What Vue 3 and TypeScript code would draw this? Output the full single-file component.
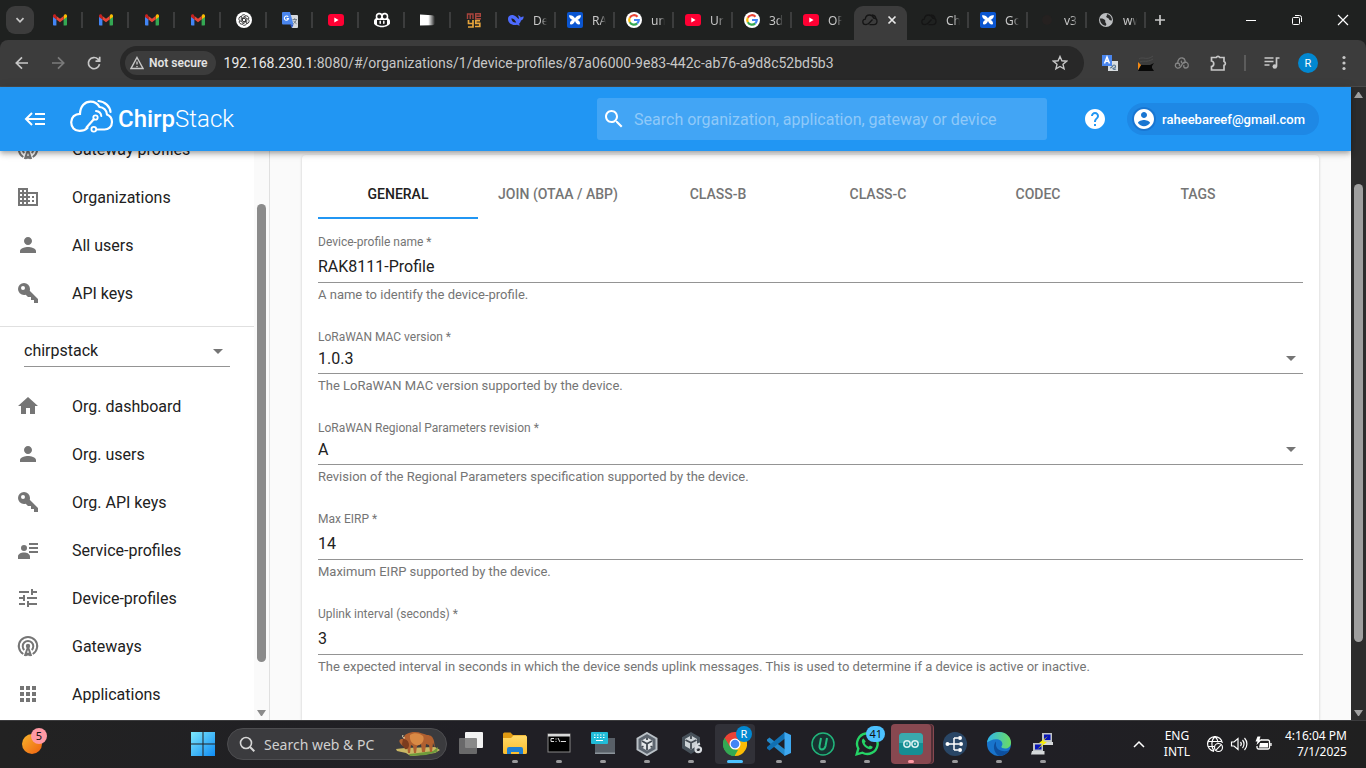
<script setup lang="ts">
import { ref } from 'vue'

interface BrowserTab { icon: string; title?: string; active?: boolean }
interface NavItem { icon: string; label: string }
interface Field { id: string; label: string; help: string; kind: 'text' | 'select'; value: string }
interface TaskApp { icon: string; name: string; state: 'idle' | 'open' | 'active' | 'alert' }

const browserTabs: BrowserTab[] = [
  { icon: 'gmail' },
  { icon: 'gmail' },
  { icon: 'gmail' },
  { icon: 'gmail' },
  { icon: 'gpt' },
  { icon: 'gtranslate' },
  { icon: 'youtube' },
  { icon: 'copilot' },
  { icon: 'flag' },
  { icon: 'meys' },
  { icon: 'whale', title: 'De' },
  { icon: 'rak', title: 'RA' },
  { icon: 'google', title: 'un' },
  { icon: 'youtube', title: 'Ur' },
  { icon: 'google', title: '3d' },
  { icon: 'youtube', title: 'OP' },
  { icon: 'cloudtab', active: true },
  { icon: 'cloudtab', title: 'Ch' },
  { icon: 'rak', title: 'Go' },
  { icon: 'blank', title: 'v3' },
  { icon: 'globe', title: 'ww' },
]

const adminNav: NavItem[] = [
  { icon: 'antenna', label: 'Gateway profiles' },
  { icon: 'domain', label: 'Organizations' },
  { icon: 'person', label: 'All users' },
  { icon: 'key', label: 'API keys' },
]

const orgNav: NavItem[] = [
  { icon: 'home', label: 'Org. dashboard' },
  { icon: 'person', label: 'Org. users' },
  { icon: 'key', label: 'Org. API keys' },
  { icon: 'details', label: 'Service-profiles' },
  { icon: 'tune', label: 'Device-profiles' },
  { icon: 'antenna', label: 'Gateways' },
  { icon: 'apps', label: 'Applications' },
]

const sections = ['General', 'Join (OTAA / ABP)', 'Class-B', 'Class-C', 'Codec', 'Tags']
const section = ref('General')

const fields = ref<Field[]>([
  { id: 'name', kind: 'text', label: 'Device-profile name *', value: 'RAK8111-Profile', help: 'A name to identify the device-profile.' },
  { id: 'mac', kind: 'select', label: 'LoRaWAN MAC version *', value: '1.0.3', help: 'The LoRaWAN MAC version supported by the device.' },
  { id: 'rev', kind: 'select', label: 'LoRaWAN Regional Parameters revision *', value: 'A', help: 'Revision of the Regional Parameters specification supported by the device.' },
  { id: 'eirp', kind: 'text', label: 'Max EIRP *', value: '14', help: 'Maximum EIRP supported by the device.' },
  { id: 'uplink', kind: 'text', label: 'Uplink interval (seconds) *', value: '3', help: 'The expected interval in seconds in which the device sends uplink messages. This is used to determine if a device is active or inactive.' },
])

const taskApps: TaskApp[] = [
  { icon: 'taskview', name: 'Task view', state: 'idle' },
  { icon: 'folder', name: 'File Explorer', state: 'open' },
  { icon: 'terminal', name: 'Command Prompt', state: 'open' },
  { icon: 'keyboard', name: 'On-screen keyboard', state: 'open' },
  { icon: 'unity', name: 'Unity Hub', state: 'open' },
  { icon: 'unity6', name: 'Unity', state: 'open' },
  { icon: 'chrome', name: 'Chrome', state: 'active' },
  { icon: 'vscode', name: 'Visual Studio Code', state: 'open' },
  { icon: 'iobit', name: 'Uninstaller', state: 'open' },
  { icon: 'whatsapp', name: 'WhatsApp', state: 'open' },
  { icon: 'arduino', name: 'Arduino IDE', state: 'alert' },
  { icon: 'mqtt', name: 'MQTT Explorer', state: 'open' },
  { icon: 'edge', name: 'Edge', state: 'open' },
  { icon: 'putty', name: 'PuTTY', state: 'open' },
]
const badges: Record<string, string> = { chrome: 'R', whatsapp: '41' }
</script>

<template>
  <div class="screen">
    <svg class="sprite" aria-hidden="true">
      <defs>
        <linearGradient id="gBlue" x1="0" y1="0" x2="1" y2="1"><stop offset="0" stop-color="#7de8fb" /><stop offset="1" stop-color="#0f8cf5" /></linearGradient>
        <linearGradient id="gSun" x1="0" y1="0" x2="1" y2="1"><stop offset="0" stop-color="#f8b62c" /><stop offset="1" stop-color="#ee5f10" /></linearGradient>
        <linearGradient id="gFolder" x1="0" y1="0" x2="0" y2="1"><stop offset="0" stop-color="#ffd968" /><stop offset="1" stop-color="#fbbd2c" /></linearGradient>
        <linearGradient id="gEdge" x1="0" y1="0" x2="1" y2="0"><stop offset="0" stop-color="#2fb5ea" /><stop offset="1" stop-color="#6bdc62" /></linearGradient>
        <linearGradient id="gFade" x1="0" y1="0" x2="1" y2="0"><stop offset=".55" stop-color="#fff" /><stop offset="1" stop-color="#fff" stop-opacity="0" /></linearGradient>
      </defs>
      <symbol id="gmail" viewBox="0 0 16 16">
        <path fill="#4285f4" d="M1 4.5v8.200c0 .5.300.8.800.8h2.600V7z" />
        <path fill="#34a853" d="M11.600 7v6.500h2.600c.5 0 .8-.3.8-.8V4.500z" />
        <path fill="#fbbc04" d="M11.600 4v3.500L15 5V3.800c0-1.300-1.500-2-2.500-1.200z" />
        <path fill="#ea4335" d="M4.400 7.500V4L8 6.700 11.600 4v3.500L8 10.200z" />
        <path fill="#c5221f" d="M1 3.800V5l3.400 2.500V4l-.9-1.400C2.500 1.800 1 2.500 1 3.800z" />
      </symbol>
      <symbol id="gpt" viewBox="0 0 16 16">
        <circle cx="8" cy="8" r="8" fill="#fff" />
        <g fill="none" stroke="#222" stroke-width=".8">
          <path id="petal" d="M8 9.800L5.300 8.200V5a2.400 2.400 0 0 1 4.300-1.400" />
          <use href="#petal" transform="rotate(60 8 8)" />
          <use href="#petal" transform="rotate(120 8 8)" />
          <use href="#petal" transform="rotate(180 8 8)" />
          <use href="#petal" transform="rotate(240 8 8)" />
          <use href="#petal" transform="rotate(300 8 8)" />
        </g>
      </symbol>
      <symbol id="gtranslate" viewBox="0 0 16 16">
        <path fill="#d6d9dd" d="M7 3h8a1 1 0 0 1 1 1v11a1 1 0 0 1-1 1h-5z" />
        <path fill="#4a86ee" d="M1 0h7l3.500 12.500H1a1 1 0 0 1-1-1V1a1 1 0 0 1 1-1z" />
        <path fill="#2a56c6" d="M8 12.500h3.500L10 16z" />
        <path fill="none" stroke="#fff" stroke-width="1.100" d="M6.200 5a2.100 2.100 0 1 0 .3 1.600H4.600" />
        <path fill="none" stroke="#6d7780" stroke-width=".9" d="M10.500 7.500h4.500M12.700 6.200v1.300M14.300 7.500c-.5 2-1.600 3.300-3 4.200M11.600 8.800c.6 1.200 1.600 2.200 3 3" />
      </symbol>
      <symbol id="youtube" viewBox="0 0 16 16"><rect y="2" width="16" height="12" rx="3" fill="#ff0033" /><path fill="#fff" d="M6.300 5.500v5L10.600 8z" /></symbol>
      <symbol id="copilot" viewBox="0 0 16 16">
        <path fill="#fff" d="M4.500.8c1.400-.3 2.700 0 3.500.9.800-.9 2.100-1.200 3.500-.9 2.500.5 3.200 2.400 2.600 5.400 1.100.7 1.900 1.800 1.900 3v2c0 1.600-4 4-8 4s-8-2.400-8-4v-2c0-1.200.8-2.300 1.900-3-.6-3 .1-4.900 2.600-5.400z" />
        <rect x="3.300" y="2.500" width="3.800" height="4" rx="1.700" fill="#1f2020" /><rect x="8.900" y="2.500" width="3.800" height="4" rx="1.700" fill="#1f2020" />
        <path fill="#1f2020" d="M3 8h10v4.500c-3 1.600-7 1.600-10 0z" /><path stroke="#fff" stroke-width="1.500" stroke-linecap="round" d="M6.200 9.300v2M9.800 9.300v2" />
      </symbol>
      <symbol id="flag" viewBox="0 0 16 16"><path fill="url(#gFade)" d="M0 2.500l12 .8c2 .3 3 1 3 2v6c0 1-1 1.700-3 1.900L0 13.500z" /></symbol>
      <symbol id="meys" viewBox="0 0 16 16">
        <g fill="none" stroke="#a8443d" stroke-width="1.400"><path d="M1.500 7V2h5.500v5M4.200 2v5M9 4.300h5.300V1.700H9.700v5H15" /></g>
        <g fill="none" stroke="#e6a53c" stroke-width="1.700"><path d="M2.500 8v3.500H7V8M7 11.500V15H2M14 8.700H9.800v2.700h4v3.100H9" /></g>
      </symbol>
      <symbol id="whale" viewBox="0 0 16 16">
        <path fill="#4d6bfe" d="M0 7c0-3 2.700-4.600 5.600-3.800C8 3.900 9.200 6 11 7c-.2-1.600-.5-2.600-1.200-3.700 1.400.2 2.500 1 3 2.100.7-.6 1.700-.9 2.900-1-.1 2.200-1.100 3.600-2.700 4.200-.3 1.500-1.100 2.700-2.200 3.500l1.300 1.200c-1.200.3-2.300 0-3-.6C4.700 14 0 11.500 0 7z" />
        <path fill="#1f2020" d="M3.500 6.200c2 .2 3.800 1.800 4.800 4.400-2.700.2-5-1.700-4.800-4.400z" />
      </symbol>
      <symbol id="rak" viewBox="0 0 16 16"><rect width="16" height="16" rx="2" fill="#0a55d0" /><path fill="#fff" d="M2 3.300c2.500-.6 4.500.6 6 3 1.500-2.400 3.500-3.600 6-3-.2 2.600-1.500 4-3.600 4.700 1.900.6 2.900 2 2.600 4.300-2.500.6-4-.8-5-3.300-1 2.500-2.500 3.900-5 3.300C2.700 10 3.700 8.600 5.600 8 3.500 7.300 2.200 5.900 2 3.300z" /></symbol>
      <symbol id="google" viewBox="0 0 16 16">
        <circle cx="8" cy="8" r="8" fill="#fff" />
        <g fill="none" stroke-width="2.200"><path stroke="#ea4335" d="M3.800 5.700A4.800 4.800 0 0 1 11.500 4.700" /><path stroke="#fbbc05" d="M3.800 5.700a4.800 4.800 0 0 0 0 4.600" /><path stroke="#34a853" d="M3.800 10.300a4.800 4.800 0 0 0 7.400 1.100" /><path stroke="#4285f4" d="M11.200 11.400A4.800 4.800 0 0 0 12.800 8H8" /></g>
      </symbol>
      <symbol id="cloudtab" viewBox="0 0 16 16"><path fill="none" stroke="#151515" stroke-width="1.300" d="M7 11.500L4 12.700C1.600 12.700.8 11 .8 9.800.8 8.200 2 7.300 3.300 7.200 3.500 4.500 5.500 3 7.600 3c2 0 3.500 1.300 4 3 2 0 3.400 1.300 3.400 3.300s-1.300 3.400-3.200 3.400H7.500M6 12.300L10.500 7.500M10 3c2.300.2 3.800 1.800 4 4" /></symbol>
      <symbol id="blank" viewBox="0 0 16 16"><circle cx="8" cy="8" r="5" fill="#252120" /></symbol>
      <symbol id="globe" viewBox="0 0 16 16"><circle cx="8" cy="8" r="7" fill="#bcbec0" /><path fill="#292a2a" d="M2 6.500c2-.3 4 .2 5 1.500.8 1-.3 2 .8 3 .8.800.7 1.900 0 2.700C4 13.500 1.800 10 2 6.500zM8.500 2.300C10 3 8 4 8.300 5c.4 1.200 2.300.6 2.600 2 .3 1.100 1.800 1.800 3 1.200C14 5 11.600 2.200 8.500 2.300z" /></symbol>

      <symbol id="antenna" viewBox="0 0 24 24">
        <g fill="none" stroke="currentColor" stroke-width="2"><path d="M7.300 20A9.200 9.200 0 1 1 16.700 20" /><path d="M8.300 16A5.300 5.300 0 1 1 15.700 16" /><path d="M12 13L8.800 22M12 13l3.200 9M10.300 19L14 21.500M13.700 19L10 21.500" /></g>
        <circle cx="12" cy="12" r="2.200" fill="currentColor" />
      </symbol>
      <symbol id="domain" viewBox="0 0 24 24"><path fill="currentColor" d="M12 7V3H2v18h20V7H12zM6 19H4v-2h2v2zm0-4H4v-2h2v2zm0-4H4V9h2v2zm0-4H4V5h2v2zm4 12H8v-2h2v2zm0-4H8v-2h2v2zm0-4H8V9h2v2zm0-4H8V5h2v2zm10 12h-8v-2h2v-2h-2v-2h2v-2h-2V9h8v10zm-2-8h-2v2h2v-2zm0 4h-2v2h2v-2z" /></symbol>
      <symbol id="person" viewBox="0 0 24 24"><path fill="currentColor" d="M12 12c2.210 0 4-1.790 4-4s-1.790-4-4-4-4 1.790-4 4 1.790 4 4 4zm0 2c-2.670 0-8 1.340-8 4v2h16v-2c0-2.660-5.330-4-8-4z" /></symbol>
      <symbol id="key" viewBox="0 0 24 24"><path fill="currentColor" d="M22,18V22H18V19H15V16H12L9.740,13.740C9.190,13.910 8.610,14 8,14A6,6 0 0,1 2,8A6,6 0 0,1 8,2A6,6 0 0,1 14,8C14,8.610 13.910,9.190 13.740,9.740L22,18M7,5A2,2 0 0,0 5,7A2,2 0 0,0 7,9A2,2 0 0,0 9,7A2,2 0 0,0 7,5Z" /></symbol>
      <symbol id="home" viewBox="0 0 24 24"><path fill="currentColor" d="M10 20v-6h4v6h5v-8h3L12 3 2 12h3v8z" /></symbol>
      <symbol id="details" viewBox="0 0 24 24"><circle cx="8" cy="10" r="3" fill="currentColor" /><path fill="currentColor" d="M2 21v-2.500C2 16 5 14.500 8 14.500s6 1.500 6 4V21zM13 5h9v2h-9zM13 9h9v2h-9zM13 13h9v2h-9z" /></symbol>
      <symbol id="tune" viewBox="0 0 24 24"><path fill="currentColor" d="M3 17v2h6v-2H3zM3 5v2h10V5H3zm10 16v-2h8v-2h-8v-2h-2v6h2zM7 9v2H3v2h4v2h2V9H7zm14 4v-2H11v2h10zm-6-4h2V7h4V5h-4V3h-2v6z" /></symbol>
      <symbol id="apps" viewBox="0 0 24 24"><path fill="currentColor" d="M4 8h4V4H4v4zm6 12h4v-4h-4v4zm-6 0h4v-4H4v4zm0-6h4v-4H4v4zm6 0h4v-4h-4v4zm6-10v4h4V4h-4zm-6 4h4V4h-4v4zm6 6h4v-4h-4v4zm0 6h4v-4h-4v4z" /></symbol>

      <symbol id="taskview" viewBox="0 0 24 24"><rect x="6" width="18" height="16" rx="1" fill="#f2f2f2" /><rect y="6" width="18" height="16" rx="1" fill="#777" fill-opacity=".85" /></symbol>
      <symbol id="folder" viewBox="0 0 24 24"><path fill="#e09a12" d="M0 2a1.500 1.500 0 0 1 1.500-1.500h6L10 3h13v8H0z" /><path fill="url(#gFolder)" d="M0 6h8l2.500-2.500H22.500A1.500 1.500 0 0 1 24 5v15.500a1.500 1.500 0 0 1-1.500 1.500h-21A1.500 1.500 0 0 1 0 20.500z" /><path fill="#1f7fd2" d="M4 22v-5a2 2 0 0 1 2-2h12a2 2 0 0 1 2 2v5h-4v-2H8v2z" /></symbol>
      <symbol id="terminal" viewBox="0 0 24 24"><rect x="1" y="2" width="22" height="18" fill="#000" stroke="#888" /><path fill="#d8d8d8" d="M1 2h22v2.500H1z" /><path stroke="#ddd" fill="none" d="M7 6.500H4v3h3M9 6.500v1M9 9v1M11 6l2 4M14 9.500h5" /></symbol>
      <symbol id="keyboard" viewBox="0 0 24 24"><rect x="4" y="6" width="20" height="16" fill="#596068" /><path fill="#8c949b" d="M4 20.500h20V22H4z" /><rect width="17" height="12" rx="1" fill="#21bcd8" /><path stroke="#fff" stroke-width="1.200" stroke-dasharray="1.500 1.500" d="M3 3h12M3 5.500h12" /><path stroke="#fff" d="M5 8.500h7" /></symbol>
      <symbol id="unity" viewBox="0 0 24 24"><path fill="#5e6670" stroke="#b9c0c6" stroke-width="2" d="M12 1l9.500 5.500v11L12 23l-9.500-5.500v-11z" /><path fill="#e5e8ea" d="M12 5.500l5.500 3.200v6.500L12 18.500l-5.500-3.300V8.700z" /><path stroke="#434a52" stroke-width="1.800" fill="none" d="M12 18v-6.200L7 9M12 11.800L17 9M12 5.500V8M6.500 15.200l2-1M17.500 15.200l-2-1" /></symbol>
      <symbol id="unity6" viewBox="0 0 24 24"><path fill="#47515a" d="M12 0l9 5.300v11L12 22l-9-5.700v-11z" /><path fill="#ccd2d6" d="M12 3.500l6 3.400v7L12 17.500l-6-3.600v-7z" /><path stroke="#434a52" stroke-width="1.800" fill="none" d="M12 17v-6.200L6.500 8M12 10.800L17.500 8M12 3.500V7" /><path fill="none" stroke="#d8dce0" stroke-width="2.200" d="M21 11.500c-3 1-4.500 3-4.500 6 0 3.500 5 3.500 5.500.3.300-2.800-3-3.500-5-1.500" /></symbol>
      <symbol id="chrome" viewBox="0 0 24 24"><path fill="#ea4335" d="M12 12L1.600 6A12 12 0 0 1 22.400 6z" /><path fill="#fbbc05" d="M12 12l10.400-6A12 12 0 0 1 12 24z" /><path fill="#34a853" d="M12 12v12A12 12 0 0 1 1.600 6z" /><path fill="#ea4335" d="M1.600 6l5.600 9L12 7h11z" /><path fill="#34a853" d="M1.600 6l5.200 9L12 17.500l3 .5-3.500 6A12 12 0 0 1 1.600 6z" /><circle cx="12" cy="12" r="5.500" fill="#fff" /><circle cx="12" cy="12" r="4.300" fill="#4285f4" /></symbol>
      <symbol id="vscode" viewBox="0 0 24 24"><path fill="#2489ca" d="M0 7.500L2.500 5.500 18 17.500V24L0 9z" /><path fill="#1070b3" d="M0 16.500l2.500 2L18 6.500V0L0 15z" /><path fill="#3ea8f0" d="M17.500 0L24 3v18l-6.500 3z" /></symbol>
      <symbol id="iobit" viewBox="0 0 24 24"><circle cx="12" cy="12" r="11" fill="#173331" stroke="#21b57b" stroke-width="1.500" /><path fill="none" stroke="#23bc7e" stroke-width="2" d="M10 6L8.500 14c-.7 4.500 5 4.500 6 0L16 6" /></symbol>
      <symbol id="whatsapp" viewBox="0 0 24 24"><path fill="none" stroke="#25d366" stroke-width="2.400" d="M1.700 22.300l1.600-5.700A10.300 10.300 0 1 1 7.400 20.700z" /><path fill="#25d366" d="M8.500 6.500c-1.300.5-2 2-1.500 3.700 1 3.400 4 6.200 7.300 7 2 .4 3.300-.7 3.400-2.400L15 13.400l-1.400 1.300c-1.900-.8-3.200-2.200-4-3.800l1.200-1.400z" /></symbol>
      <symbol id="arduino" viewBox="0 0 24 24"><rect y="1" width="24" height="22" rx="4" fill="#158e93" /><path fill="#3aa9ad" d="M4 1h16a4 4 0 0 1 4 4v6H0V5a4 4 0 0 1 4-4z" /><g fill="none" stroke="#d8f0f0" stroke-width="1.500"><circle cx="8" cy="12" r="3.200" /><circle cx="16" cy="12" r="3.200" /></g><path stroke="#d8f0f0" d="M7 12h2M15 12h2M16 11v2" /></symbol>
      <symbol id="mqtt" viewBox="0 0 24 24"><circle cx="12" cy="12" r="12" fill="#294666" /><path fill="none" stroke="#fff" stroke-width="1.500" d="M5 12h6M11 6v12M11 6h4M11 12h5M11 18h4" /><g fill="#fff"><circle cx="4.500" cy="12" r="2" /><circle cx="17" cy="6" r="2" /><circle cx="18" cy="12" r="2" /><circle cx="17" cy="18" r="2" /></g></symbol>
      <symbol id="edge" viewBox="0 0 24 24"><circle cx="12" cy="12" r="12" fill="#1874cc" /><path fill="url(#gEdge)" d="M0 10.500C1 4.500 6 0 12 0c7 0 12 5 12 10.500 0 4-2.800 6-6 6-2.300 0-3.600-.8-3.600-1.700 0-.7 1-1 1-3 0-2.600-2.700-4.600-6.400-4.600-4 0-7 2-9 3.300z" /><path fill="#0d4f9e" d="M9 9.500c-3.500 3.500-2.600 11 3 14.400C18 23.500 21 21 22.500 18c-5 2.500-12.500 1-13.500-4.500z" /></symbol>
      <symbol id="putty" viewBox="0 0 24 24"><rect x="11" y="1" width="10" height="9" fill="#bfc3c6" /><rect x="13" y="2.500" width="6.500" height="5.500" fill="#0714b8" /><path fill="#d5d8da" d="M11 10h11v3H10z" /><rect x="2" y="11" width="10" height="8" fill="#bfc3c6" /><rect x="4" y="12.500" width="6.500" height="5" fill="#0714b8" /><path fill="#d5d8da" d="M1 19h12.500v3.500H0z" /><path fill="#f9ee00" d="M17 4l-9 7 4 .5-6 6 10-7.500-4-.7z" /></symbol>
    </svg>

    <header class="tabstrip">
      <button class="tab-search" aria-label="Search tabs"><svg width="12" height="12" viewBox="0 0 12 12"><path class="line" d="M2.500 4.200L6 7.800l3.500-3.600" /></svg></button>
      <div class="tabs">
        <button v-for="(tab, i) in browserTabs" :key="i" class="tab" :class="{ wide: tab.title || tab.active, active: tab.active, before: browserTabs[i + 1]?.active }" :aria-label="tab.title || tab.icon">
          <svg class="fav"><use :href="'#' + tab.icon" /></svg>
          <span v-if="tab.title" class="tab-title">{{ tab.title }}</span>
          <svg v-if="tab.active" width="10" height="10" viewBox="0 0 10 10"><path class="line bright" d="M1.500 1.500l7 7M8.500 1.500l-7 7" /></svg>
        </button>
      </div>
      <button class="new-tab" aria-label="New tab"><svg width="12" height="12" viewBox="0 0 12 12"><path class="line" d="M6 1v10M1 6h10" /></svg></button>
      <div class="window-buttons">
        <button aria-label="Minimize"><svg width="12" height="12" viewBox="0 0 12 12"><path stroke="#fff" d="M1 6.500h10" /></svg></button>
        <button aria-label="Restore"><svg width="12" height="12" viewBox="0 0 12 12" fill="none" stroke="#fff"><rect x="1.500" y="3.500" width="7" height="7" rx="1" /><path d="M4 1.500h4.500a2 2 0 0 1 2 2V8" /></svg></button>
        <button aria-label="Close"><svg width="12" height="12" viewBox="0 0 12 12"><path stroke="#fff" stroke-width="1.200" d="M1 1l10 10M11 1L1 11" /></svg></button>
      </div>
    </header>

    <div class="toolbar">
      <button aria-label="Back"><svg width="16" height="16" viewBox="0 0 16 16"><path class="line" d="M14 8H2.500M8 2.300L2.300 8 8 13.700" /></svg></button>
      <button class="dim" aria-label="Forward"><svg width="16" height="16" viewBox="0 0 16 16"><path class="line" d="M2 8h11.500M8 2.300L13.700 8 8 13.700" /></svg></button>
      <button aria-label="Reload"><svg width="16" height="16" viewBox="0 0 16 16"><path class="line" d="M13.500 9.200A5.600 5.600 0 1 1 12 4.200l1.600 1.600M13.700 1.800v4.300H9.500" /></svg></button>
      <div class="omnibox">
        <button class="chip-secure"><svg width="14" height="14" viewBox="0 0 14 14"><path class="line thin" d="M7 1.500L13 12.500H1z" /><path class="line thin" d="M7 5.500v3M7 10v1.200" /></svg>Not secure</button>
        <span class="url" aria-label="Address"><b>192.168.230.1</b>:8080/#/organizations/1/device-profiles/87a06000-9e83-442c-ab76-a9d8c52bd5b3</span>
        <button class="star" aria-label="Bookmark"><svg width="16" height="16" viewBox="0 0 16 16"><path class="line thin" d="M8 1.500l1.900 4.300 4.700.4-3.600 3.100 1.100 4.600L8 11.500l-4.100 2.400L5 9.300 1.400 6.200l4.700-.4z" /></svg></button>
      </div>
      <button aria-label="Translate"><svg width="16" height="16" viewBox="0 0 16 16"><path fill="#d8dde0" d="M6 6h10v10H6z" /><path fill="#4a86ee" d="M0 0h10v11H0z" /><path fill="none" stroke="#fff" stroke-width="1.500" d="M2.500 8.500L5 2l2.500 6.500M3.500 6.300h3" /><path fill="none" stroke="#52728f" stroke-width="1.200" d="M8 13c3 0 2-3 4-3s2 3 0 3-1 2 2 1" /></svg></button>
      <button aria-label="Extension"><svg width="16" height="16" viewBox="0 0 16 16"><path fill="#080808" d="M0 16l3-6h9l4-2-2 3v2l2 3z" /><path fill="#f58a12" d="M0 7l3 3-3 5z" /><path stroke="#4c4c4c" fill="none" d="M1 4c4-3 8 2 14-3M2 7c3-2 7 1 13-3" /></svg></button>
      <button aria-label="Extension"><svg width="16" height="16" viewBox="0 0 16 16" fill="none" stroke="#858585" stroke-width="1.300"><path d="M8 9.500c1.200-2 3-3 4.800-2 2.400 1.400 1.800 5.500-1 5.500-2 0-2.800-2-1.500-3M8 9.500C6.500 13 4.500 13.500 3 13 .5 12 .8 8.300 3.500 8c2 0 2.800 2 1.500 3M3.800 8C3.500 4.500 6 2.500 8.500 3c3 .6 3.500 4.500 1 5.200-2 .4-2.800-1.400-1.800-2.400" /></svg></button>
      <button aria-label="Extensions"><svg width="18" height="18" viewBox="0 0 18 18"><path class="line" d="M2.500 3.500H7.200a2 2 0 0 1 3.600 0H15v4a2 2 0 0 1 0 3.800V16H2.500v-3.500c3-.5 3-5 0-5.500z" /></svg></button>
      <i class="bar"></i>
      <button aria-label="Media"><svg width="18" height="16" viewBox="0 0 18 16"><path class="line" d="M1.500 3h9M1.500 6.500h9M1.500 10h5" /><circle cx="11.800" cy="11.500" r="2.300" fill="#c7c7c7" /><path class="line" d="M13.500 11.500V3h3" /></svg></button>
      <button aria-label="Profile"><span class="avatar">R</span></button>
      <button aria-label="Menu"><svg width="16" height="16" viewBox="0 0 16 16" fill="#c7c7c7"><circle cx="8" cy="2.500" r="1.600" /><circle cx="8" cy="8" r="1.600" /><circle cx="8" cy="13.500" r="1.600" /></svg></button>
    </div>

    <div class="viewport">
      <div class="page">
        <div class="appbar">
          <button class="icon-button" aria-label="Toggle menu"><svg width="24" height="24" viewBox="0 0 24 24" fill="none" stroke="#fff" stroke-width="2"><path d="M12 7h10M4 12h18M12 17h10M9 6l-6 6 6 6" /></svg></button>
          <a class="logo" href="#/" aria-label="ChirpStack">
            <svg width="44" height="34" viewBox="0 0 44 34" fill="none" stroke="#fff" stroke-width="2.200" stroke-linecap="round">
              <path d="M17.500 29c-2.500 2.200-5 2.900-8 2.900-5 0-8.300-3.800-8.300-8.600 0-5.100 3.700-8.500 8.800-8.500C10.300 6.800 15 2.700 20.500 2.700c4.900 0 7.400 2.500 9 5.300 4 .2 7.300 3.500 7.500 7.500 3.300 1.400 5 3.900 5 7.500 0 5-3.700 7.500-7.500 7.500H27" />
              <path d="M16.500 28.500l7.300-8.200M28.500 2c6.500.5 11.500 5.500 12 11" />
              <path d="M26 12c3 .3 5 2.300 5.300 5" stroke-width="2" />
              <circle cx="25.500" cy="18.500" r="2.200" stroke-width="1.800" /><circle cx="23.800" cy="30.200" r="2.400" stroke-width="1.800" />
            </svg>
            <span class="brand"><strong>Chirp</strong>Stack</span>
          </a>
          <label class="search"><svg width="24" height="24" viewBox="0 0 24 24"><path fill="#fff" d="M15.500 14h-.79l-.28-.27C15.410 12.590 16 11.110 16 9.500 16 5.910 13.090 3 9.500 3S3 5.910 3 9.500 5.910 16 9.500 16c1.610 0 3.090-.59 4.230-1.570l.27.28v.79l5 4.990L20.490 19l-4.990-5zm-6 0C7.010 14 5 11.990 5 9.500S7.010 5 9.500 5 14 7.010 14 9.500 11.990 14 9.500 14z" /></svg><input type="text" placeholder="Search organization, application, gateway or device" aria-label="Search" /></label>
          <a class="icon-button" href="#/help" aria-label="Help"><svg width="24" height="24" viewBox="0 0 24 24"><path fill="#fff" d="M12 2C6.480 2 2 6.480 2 12s4.480 10 10 10 10-4.480 10-10S17.520 2 12 2zm1 17h-2v-2h2v2zm2.070-7.750l-.9.920C13.450 12.900 13 13.500 13 15h-2v-.5c0-1.100.450-2.100 1.170-2.830l1.240-1.260c.370-.360.590-.860.590-1.410 0-1.100-.9-2-2-2s-2 .9-2 2H8c0-2.210 1.790-4 4-4s4 1.790 4 4c0 .880-.360 1.680-.930 2.250z" /></svg></a>
          <button class="user"><span class="user-icon"><svg width="24" height="24" viewBox="0 0 24 24"><path fill="#fff" d="M12 2C6.480 2 2 6.480 2 12s4.480 10 10 10 10-4.480 10-10S17.520 2 12 2zm0 3c1.660 0 3 1.340 3 3s-1.340 3-3 3-3-1.340-3-3 1.340-3 3-3zm0 14.200c-2.500 0-4.710-1.280-6-3.220.030-1.990 4-3.080 6-3.080 1.990 0 5.970 1.090 6 3.080-1.290 1.940-3.500 3.220-6 3.220z" /></svg></span>raheebareef@gmail.com</button>
        </div>

        <div class="body">
          <aside class="sidebar">
            <nav class="menu">
              <ul class="scrolled"><li v-for="item in adminNav" :key="item.label"><a href="#/"><svg class="nav-icon"><use :href="'#' + item.icon" /></svg>{{ item.label }}</a></li></ul>
              <div class="org">
                <select aria-label="Organization"><option>chirpstack</option></select>
                <svg class="caret" viewBox="0 0 24 24"><path d="M7 10l5 5 5-5z" /></svg>
              </div>
              <ul><li v-for="item in orgNav" :key="item.label"><a href="#/"><svg class="nav-icon"><use :href="'#' + item.icon" /></svg>{{ item.label }}</a></li></ul>
            </nav>
            <div class="scrollbar light"><i></i><i class="thumb"></i><svg viewBox="0 0 15 15"><path d="M3 5h9l-4 6h-1z" /></svg></div>
          </aside>

          <main class="content">
            <section class="card">
              <div class="section-tabs" role="tablist">
                <button v-for="name in sections" :key="name" role="tab" :aria-selected="section === name" :class="{ on: section === name }" @click="section = name">{{ name }}</button>
              </div>
              <form>
                <div v-for="field in fields" :key="field.id" class="field">
                  <label :for="field.id">{{ field.label }}</label>
                  <input v-if="field.kind === 'text'" :id="field.id" v-model="field.value" type="text" />
                  <div v-else class="pick">
                    <select :id="field.id" v-model="field.value"><option>{{ field.value }}</option></select>
                    <svg class="caret" viewBox="0 0 24 24"><path d="M7 10l5 5 5-5z" /></svg>
                  </div>
                  <p>{{ field.help }}</p>
                </div>
              </form>
            </section>
          </main>
        </div>
      </div>
      <div class="scrollbar dark"><svg viewBox="0 0 15 15"><path d="M3 11h9L8 5H7z" /></svg><i class="thumb"></i><svg viewBox="0 0 15 15"><path d="M3 5h9l-4 6h-1z" /></svg></div>
    </div>

    <footer class="taskbar">
      <div class="widgets">
        <button aria-label="Widgets"><svg width="20" height="20" viewBox="0 0 20 20"><circle cx="10" cy="10" r="10" fill="url(#gSun)" /></svg><span class="badge pink">5</span></button>
      </div>
      <button class="task" aria-label="Start"><svg width="24" height="24" viewBox="0 0 24 24"><path fill="url(#gBlue)" d="M0 0h11.500v11.500H0zM12.500 0H24v11.500H12.500zM0 12.500h11.500V24H0zM12.500 12.500H24V24H12.500z" /></svg></button>
      <label class="task-search">
        <svg width="16" height="16" viewBox="0 0 16 16" fill="none" stroke="#d6d6d6" stroke-width="1.600"><circle cx="7" cy="7" r="5.500" /><path d="M11 11l4.300 4.300" stroke-width="2" /></svg>
        <input type="text" placeholder="Search web &amp; PC" aria-label="Search web and PC" />
        <svg width="44" height="26" viewBox="0 0 44 26">
          <path fill="#c9b765" d="M0 18l9-1 30-1 5 3-5 3-22 3c-3 0-5-2-7-3l-9-2z" /><path fill="#6f9b3b" d="M13 23l9-1 15-2 5-4-1 5-11 3-16 1z" />
          <path fill="#b06030" d="M7 8c1-5 6-7 12-7 5 0 8 2 12 3 4 0 6 2 7 6l1 7-2-5-1 9h-2l-1-7-3-1-1 8h-3l-1-8-4 2-1 7h-2l-1-7-2-1-1 8h-2l-1-8c-3 2-5 1-7-2-1-2-1-3 1-4z" />
          <path fill="#d98a45" d="M14 4c4-3 10-2 13 1 2 4-1 8-4 9-5 1-10-3-9-10z" /><path fill="#7c3c1e" d="M7 8c3 0 6 2 6 6 0 3-2 5-4 4-1-2-3-3-3-5z" /><path fill="none" stroke="#eee0bb" d="M7 4c-1 2 0 3 2 3" />
        </svg>
      </label>
      <button v-for="app in taskApps" :key="app.name" class="task" :class="app.state" :aria-label="app.name">
        <svg class="app-icon" width="24" height="24"><use :href="'#' + app.icon" /></svg>
        <span v-if="badges[app.icon]" class="badge blue" :class="app.icon">{{ badges[app.icon] }}</span>
      </button>
      <div class="tray">
        <button aria-label="Hidden icons"><svg width="12" height="8" viewBox="0 0 12 8"><path fill="none" stroke="#fff" stroke-width="1.500" d="M1 7l5-5 5 5" /></svg></button>
        <span class="lang">ENG<br />INTL</span>
        <span class="status">
          <svg width="18" height="18" viewBox="0 0 18 18" fill="none" stroke="#fff" stroke-width="1.200"><path d="M8 16.300A7.400 7.400 0 1 1 16.300 8M1.500 6.500h14M1.500 11.500H8M9 1.500C5 5 5 12 8 16M9 1.500c2 2 3 4 3 6" /><circle cx="12.500" cy="12.500" r="4" /><path d="M9.700 15.300l5.600-5.600" /></svg>
          <svg width="18" height="18" viewBox="0 0 18 18" fill="none" stroke="#fff" stroke-width="1.200"><path d="M1.500 7v4h2.500L8 14.500v-11L4 7zM10.500 7c1 1.200 1 2.800 0 4M12.500 5c2 2.200 2 5.800 0 8M14.500 3c3.200 3.500 3.200 8.500 0 12" /></svg>
          <svg width="18" height="18" viewBox="0 0 18 18" fill="none" stroke="#fff" stroke-width="1.300"><path d="M7 5h7a1.500 1.500 0 0 1 1.500 1.500v6A1.500 1.500 0 0 1 14 14H4.500A1.500 1.500 0 0 1 3 12.500V11M17 8v3" /><path fill="#fff" stroke="none" d="M6 8h8v4.500H5zM3.500 1.500h3L5.500 4.500H8L2.500 10l1-3.500h-2z" /></svg>
        </span>
        <span class="clock">4:16:04 PM<br />7/1/2025</span>
      </div>
    </footer>
  </div>
</template>

<style>
html, body { background: #202121; }
</style>

<style scoped>
.screen { display: flex; flex-direction: column; height: 100vh; overflow: hidden; font-family: Roboto, sans-serif; font-size: 16px; color: #212121; }
* { box-sizing: border-box; }
button { margin: 0; padding: 0; border: 0; background: none; color: inherit; font: inherit; }
input, select { margin: 0; padding: 0; border: 0; outline: 0; border-radius: 0; background: none; color: inherit; font: inherit; appearance: none; min-width: 0; }
a { color: inherit; text-decoration: none; }
ul { margin: 0; padding: 0; list-style: none; }
p { margin: 0; }
svg { flex: none; display: block; }
.sprite { position: absolute; width: 0; height: 0; }
.line { fill: none; stroke: #c7c7c7; stroke-width: 1.7px; }
.line.thin { stroke-width: 1.4px; }
.line.bright { stroke: #e8e8e8; }

/* browser chrome */
.tabstrip { flex: none; display: flex; align-items: center; height: 40px; padding-left: 6px; background: #1f2120; color: #c7c7c7; font-family: "Noto Sans", sans-serif; font-size: 12px; }
.tab-search { flex: none; display: grid; place-items: center; width: 28px; height: 28px; margin-right: 3px; border-radius: 9px; background: #3c3c3c; }
.tabs { display: flex; align-self: stretch; min-width: 0; }
.tab { position: relative; flex: none; display: flex; align-items: center; gap: 9px; width: 46px; padding-left: 15px; }
.tab.wide { width: 59px; padding-left: 11px; }
.tab::after { content: ""; position: absolute; right: 0; top: 12px; width: 2px; height: 16px; background: #3c3d3d; }
.tab.before::after, .tab.active::after { display: none; }
.fav { width: 16px; height: 16px; }
.tab-title { white-space: nowrap; mask-image: linear-gradient(90deg, #000 8px, transparent 14px); }
.tab.active { margin: 6px 3px 0; width: 53px; padding: 0 0 6px 8px; border-radius: 9px 9px 0 0; background: #3c3c3c; }
.new-tab { flex: none; display: grid; place-items: center; width: 28px; height: 28px; }
.window-buttons { display: flex; align-self: stretch; margin-left: auto; }
.window-buttons button { display: grid; place-items: center; width: 46px; }
.toolbar { flex: none; display: flex; align-items: center; height: 47px; padding: 0 4px; border-bottom: 1px solid #4a4a4a; border-radius: 8px 8px 0 0; background: #3c3c3c; font-family: Roboto, sans-serif; }
.toolbar > button { flex: none; display: grid; place-items: center; width: 36px; height: 36px; }
.dim { opacity: .45; }
.omnibox { flex: 1; display: flex; align-items: center; min-width: 0; height: 34px; margin: 0 8px; padding: 0 16px 0 5px; border-radius: 17px; background: #282828; }
.chip-secure { flex: none; display: flex; align-items: center; gap: 5px; height: 24px; padding: 0 8px 0 5px; border-radius: 12px; background: #3c3c3c; color: #e3e3e3; font-size: 12px; font-weight: 600; }
.url { flex: 1; overflow: hidden; margin-left: 8px; white-space: nowrap; color: #c7c7c7; font-size: 14px; }
.url b { font-weight: 400; color: #e8e8e8; }
.bar { width: 2px; height: 16px; margin: 0 8px; background: #5c5c5c; }
.avatar { display: grid; place-items: center; width: 20px; height: 20px; border-radius: 50%; background: #0288d1; color: #fff; font-size: 11px; }

/* web page */
.viewport { flex: 1; display: flex; min-height: 0; }
.page { flex: 1; display: flex; flex-direction: column; min-width: 0; background: #fafafa; }
.appbar { position: relative; z-index: 2; flex: none; display: flex; align-items: center; height: 64px; padding: 0 32px 0 11px; background: #2196f3; box-shadow: 0 2px 4px -1px rgba(0, 0, 0, .2), 0 4px 5px rgba(0, 0, 0, .14), 0 1px 10px rgba(0, 0, 0, .12); color: #fff; }
.icon-button { flex: none; display: grid; place-items: center; width: 48px; height: 48px; }
.logo { display: flex; align-items: center; gap: 4px; height: 48px; margin: 0 auto 0 11px; }
.logo svg { margin-bottom: 6px; }
.brand { font-size: 24px; font-weight: 300; line-height: 28px; }
.brand strong { font-weight: 500; }
.search { display: flex; align-items: center; gap: 8px; width: 450px; height: 42px; margin-right: 24px; padding: 0 5px; border-radius: 3px; background: #42a5f5; }
.search input { flex: 1; }
.search input::placeholder { color: #8fc9f9; opacity: 1; }
.user { display: flex; align-items: center; gap: 6px; height: 32px; margin-left: 8px; padding: 0 14px 0 5px; border-radius: 16px; background: #1e88e5; font-size: 13px; font-weight: 500; }
.user-icon { border-radius: 50%; background: #1976d2; }
.body { flex: 1; display: flex; min-height: 0; }
.sidebar { flex: none; display: flex; width: 270px; border-right: 1px solid #e0e0e0; background: #fff; }
.menu { flex: 1; overflow: hidden; }
.menu ul.scrolled { margin-top: -26px; padding-bottom: 9px; border-bottom: 1px solid #e0e0e0; }
.menu a { display: flex; align-items: center; gap: 32px; height: 48px; padding: 0 16px; }
.nav-icon { width: 24px; height: 24px; color: #757575; }
.org { position: relative; margin: 8px 24px 15px; }
.org select { display: block; width: 100%; height: 32px; border-bottom: 1px solid #949494; }
.caret { position: absolute; right: 0; top: 4px; width: 24px; height: 24px; fill: #757575; pointer-events: none; }
.scrollbar { flex: none; display: grid; width: 15px; }
.scrollbar svg { width: 15px; height: 15px; align-self: end; }
.scrollbar svg:first-child { align-self: start; }
.thumb { width: 9px; margin: 0 auto; border-radius: 5px; background: currentColor; }
.light { grid-template-rows: 53fr 458fr 58fr; background: #fafafa; color: #8b8b8b; }
.dark { grid-template-rows: 97fr 458fr 78fr; background: #2c2c2c; color: #9f9f9f; }
.scrollbar svg { fill: currentColor; }
.content { flex: 1; display: flex; min-width: 0; padding: 4px 32px 0; overflow: hidden; }
.card { flex: 1; min-width: 0; padding: 16px; border-radius: 4px 4px 0 0; background: #fff; box-shadow: 0 1px 3px rgba(0, 0, 0, .2); }
.section-tabs { display: flex; }
.section-tabs button { flex: none; width: 160px; height: 48px; border-bottom: 2px solid transparent; color: #757575; font-size: 14px; font-weight: 500; text-transform: uppercase; }
.section-tabs .on { border-color: #2196f3; color: #212121; }
form { display: flex; flex-direction: column; gap: 26px; padding-top: 15px; }
.field label { display: block; color: #757575; font-size: 12px; line-height: 16px; }
.field input { display: block; width: 100%; height: 33px; border-bottom: 1px solid #949494; }
.pick { position: relative; }
.pick select { display: block; width: 100%; height: 29px; padding-bottom: 2px; border-bottom: 1px solid #949494; }
.pick .caret { top: 1px; }
.field p { padding-top: 4px; color: #757575; font-size: 13px; line-height: 16px; }

/* desktop taskbar */
.taskbar { flex: none; display: flex; align-items: center; height: 48px; padding-bottom: 1px; border-top: 1px solid #3c3c3e; background: linear-gradient(90deg, #222 0, #201f25 35%, #201f25 75%, #202020 100%); color: #fff; font-family: "Noto Sans", sans-serif; }
.widgets { flex: none; width: 181px; padding-left: 22px; }
.widgets button { position: relative; display: block; }
.badge { position: absolute; display: grid; place-items: center; height: 16px; min-width: 16px; border-radius: 8px; color: #111; font-size: 11px; line-height: 16px; }
.pink { left: 9px; top: -6px; background: #ff99a4; }
.blue { right: 3px; top: 2px; background: #4cc2ff; }
.blue.chrome { background: #0288d1; color: #fff; }
.blue.whatsapp { right: 2px; padding: 0 3px; }
.task { position: relative; flex: none; display: grid; place-items: center; width: 40px; height: 40px; margin: 0 2px; border-radius: 4px; }
.task.open::after, .task.active::after, .task.alert::after { content: ""; position: absolute; left: 17px; bottom: 1px; width: 6px; height: 3px; border-radius: 2px; background: #9a9a9c; }
.task.active { background: #313138; }
.task.active::after { left: 12px; width: 16px; background: #4cc2ff; }
.task.alert { background: #884850; box-shadow: 2px 0 #4f2f36, 3px 0 #884850; }
.task.alert::after { background: #ff99a4; }
.task-search { flex: none; display: flex; align-items: center; width: 220px; height: 32px; margin: 0 2px; padding: 0 6px 0 11px; border: 1px solid #4d4d50; border-radius: 16px; background: #3b3b3e; }
.task-search input { flex: 1; margin-left: 9px; font-size: 14px; }
.task-search input::placeholder { color: #d0d0d0; opacity: 1; }
.tray { display: flex; align-items: center; margin-left: auto; padding-right: 19px; font-size: 12px; line-height: 16px; }
.lang { margin: 0 16px 0 19px; text-align: center; }
.status { display: flex; gap: 6px; margin-right: 13px; }
.clock { text-align: right; }
</style>
